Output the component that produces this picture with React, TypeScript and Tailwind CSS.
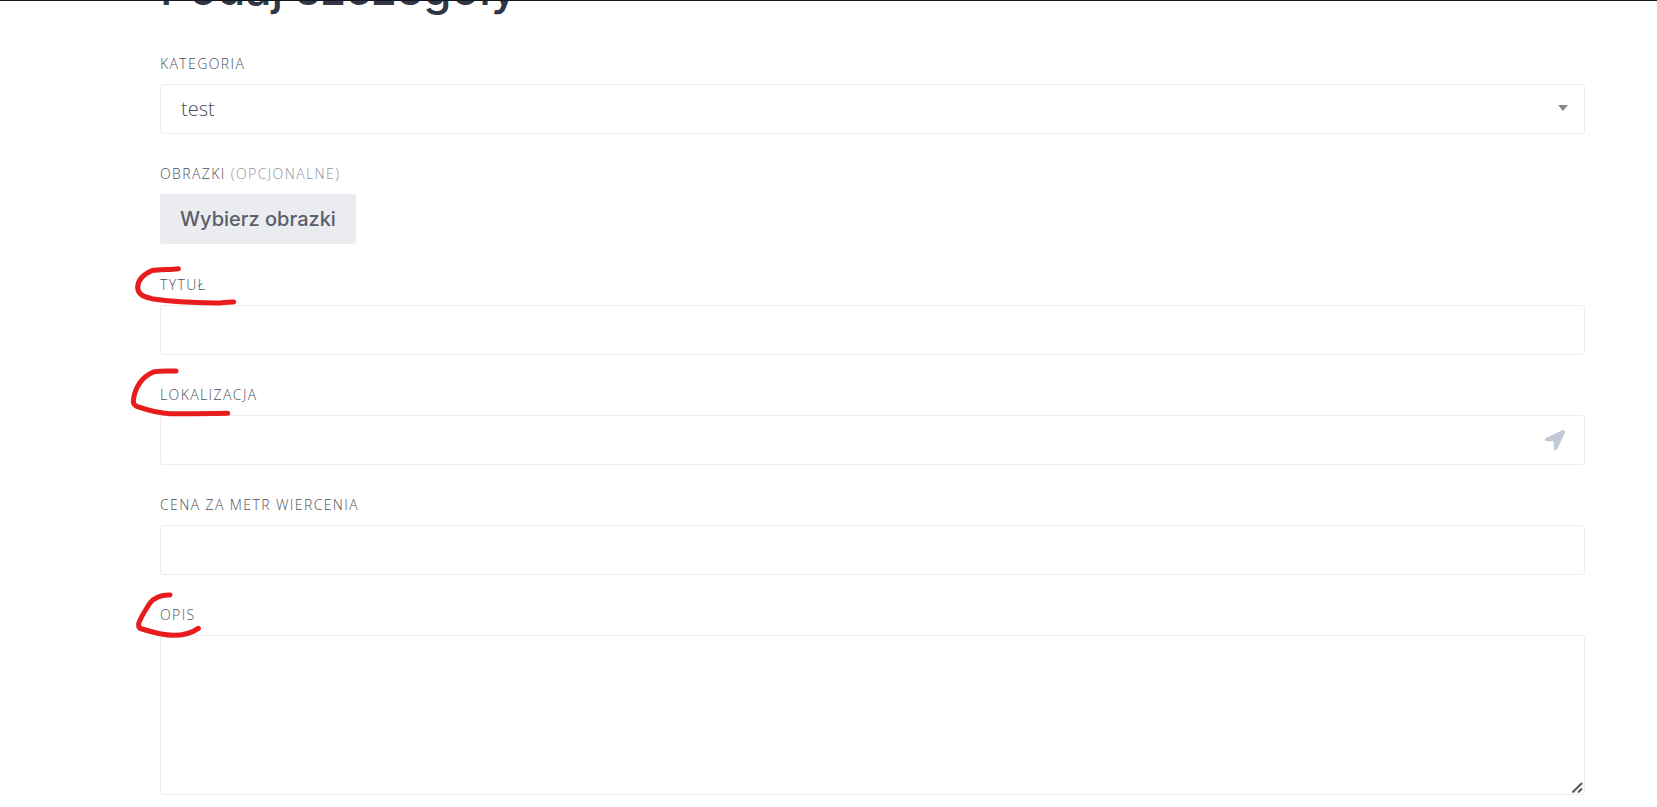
import type { ReactNode } from 'react';
import { FaLocationArrow } from 'react-icons/fa';

const CONTROL =
	'block w-full rounded-[3px] border border-[#ededf2] bg-white px-5 text-xl font-light text-[#4b4f58] outline-none focus:border-[#c1c8d6]';

const MARKS = {
	title: 'M175 38 C152 42 120 39 95 44 C70 55 53 73 53 95 C54 115 70 122 95 128 C150 136 225 140 285 141 C310 141 320 137 341 138',
	location:
		'M168 30 C148 30 122 28 100 33 C62 50 45 80 40 118 C39 128 42 132 50 136 C85 148 118 157 150 158 C205 159 265 158 323 157',
	description:
		'M150 30 C128 29 107 34 90 54 C76 76 62 96 56 116 C55 126 58 131 66 132 C98 142 128 151 160 151 C192 151 218 142 235 130',
};

interface FieldProps {
	id: string;
	label: string;
	optional?: boolean;
	mark?: ReactNode;
	children: ReactNode;
}

function Field({ id, label, optional, mark, children }: FieldProps) {
	return (
		<div className="relative">
			<label
				htmlFor={id}
				className="mb-[10px] block text-sm leading-5 font-light tracking-widest text-[#4b4f58] uppercase"
			>
				{label}
				{optional && <span className="text-[#8f929b]"> (opcjonalne)</span>}
			</label>
			{children}
			{mark}
		</div>
	);
}

function Mark({ d, viewBox }: { d: string; viewBox: string }) {
	return (
		<svg
			className="pointer-events-none absolute -top-5 -left-[30px] h-[60px] w-[110px]"
			viewBox={viewBox}
			fill="none"
			stroke="#e81c1c"
			strokeWidth="15"
			strokeLinecap="round"
			strokeLinejoin="round"
			aria-hidden="true"
		>
			<path d={d} />
		</svg>
	);
}

export default function App() {
	return (
		<main className="bg-white pb-3 font-['Open_Sans','Noto_Sans',sans-serif]">
			<header className="flex h-5 items-end overflow-hidden border-t border-[#16181f] pl-40">
				<h1 className="font-[Inter,sans-serif] text-[46px] leading-[64px] font-medium text-[#323645]">
					Podaj szczegóły
				</h1>
			</header>

			<form className="mt-[34px] flex flex-col gap-[30px] pr-[72px] pl-40" onSubmit={(e) => e.preventDefault()}>
				<Field id="category" label="Kategoria">
					<div className="relative">
						<select id="category" className={`${CONTROL} h-[50px] appearance-none`} defaultValue="test">
							<option value="test">test</option>
						</select>
						<svg
							className="pointer-events-none absolute top-[21px] right-[17px] h-[6px] w-[10px]"
							viewBox="0 0 10 6"
							fill="#888"
							aria-hidden="true"
						>
							<path d="M0 0h10L5 6z" />
						</svg>
					</div>
				</Field>

				<Field id="images" label="Obrazki" optional>
					<button
						id="images"
						type="button"
						className="mb-px h-[50px] rounded-[3px] bg-[#ebecf0] px-5 font-[Inter,sans-serif] text-xl font-medium text-[#5a5e69] hover:bg-[#e1e2e8]"
					>
						Wybierz obrazki
					</button>
				</Field>

				<Field id="title" label="Tytuł" mark={<Mark d={MARKS.title} viewBox="30 -3 330 180" />}>
					<input id="title" type="text" className={`${CONTROL} h-[50px]`} />
				</Field>

				<Field id="location" label="Lokalizacja" mark={<Mark d={MARKS.location} viewBox="30 12 330 180" />}>
					<div className="relative">
						<input id="location" type="text" className={`${CONTROL} h-[50px]`} />
						<button
							type="button"
							aria-label="Lokalizacja"
							className="absolute top-[15px] right-5 text-xl text-[#c1c8d6]"
						>
							<FaLocationArrow />
						</button>
					</div>
				</Field>

				<Field id="price" label="Cena za metr wiercenia">
					<input id="price" type="text" className={`${CONTROL} h-[50px]`} />
				</Field>

				<Field id="description" label="Opis" mark={<Mark d={MARKS.description} viewBox="30 0 330 180" />}>
					<div className="relative">
						<textarea id="description" className={`${CONTROL} h-40 resize-none py-3`} />
						<svg
							className="pointer-events-none absolute right-[2px] bottom-[2px] h-[11px] w-[11px]"
							viewBox="0 0 11 11"
							stroke="#555"
							strokeWidth="2"
							aria-hidden="true"
						>
							<path d="M.5 10.5 10 1M6 10.5 10 6.5" />
						</svg>
					</div>
				</Field>
			</form>
		</main>
	);
}
